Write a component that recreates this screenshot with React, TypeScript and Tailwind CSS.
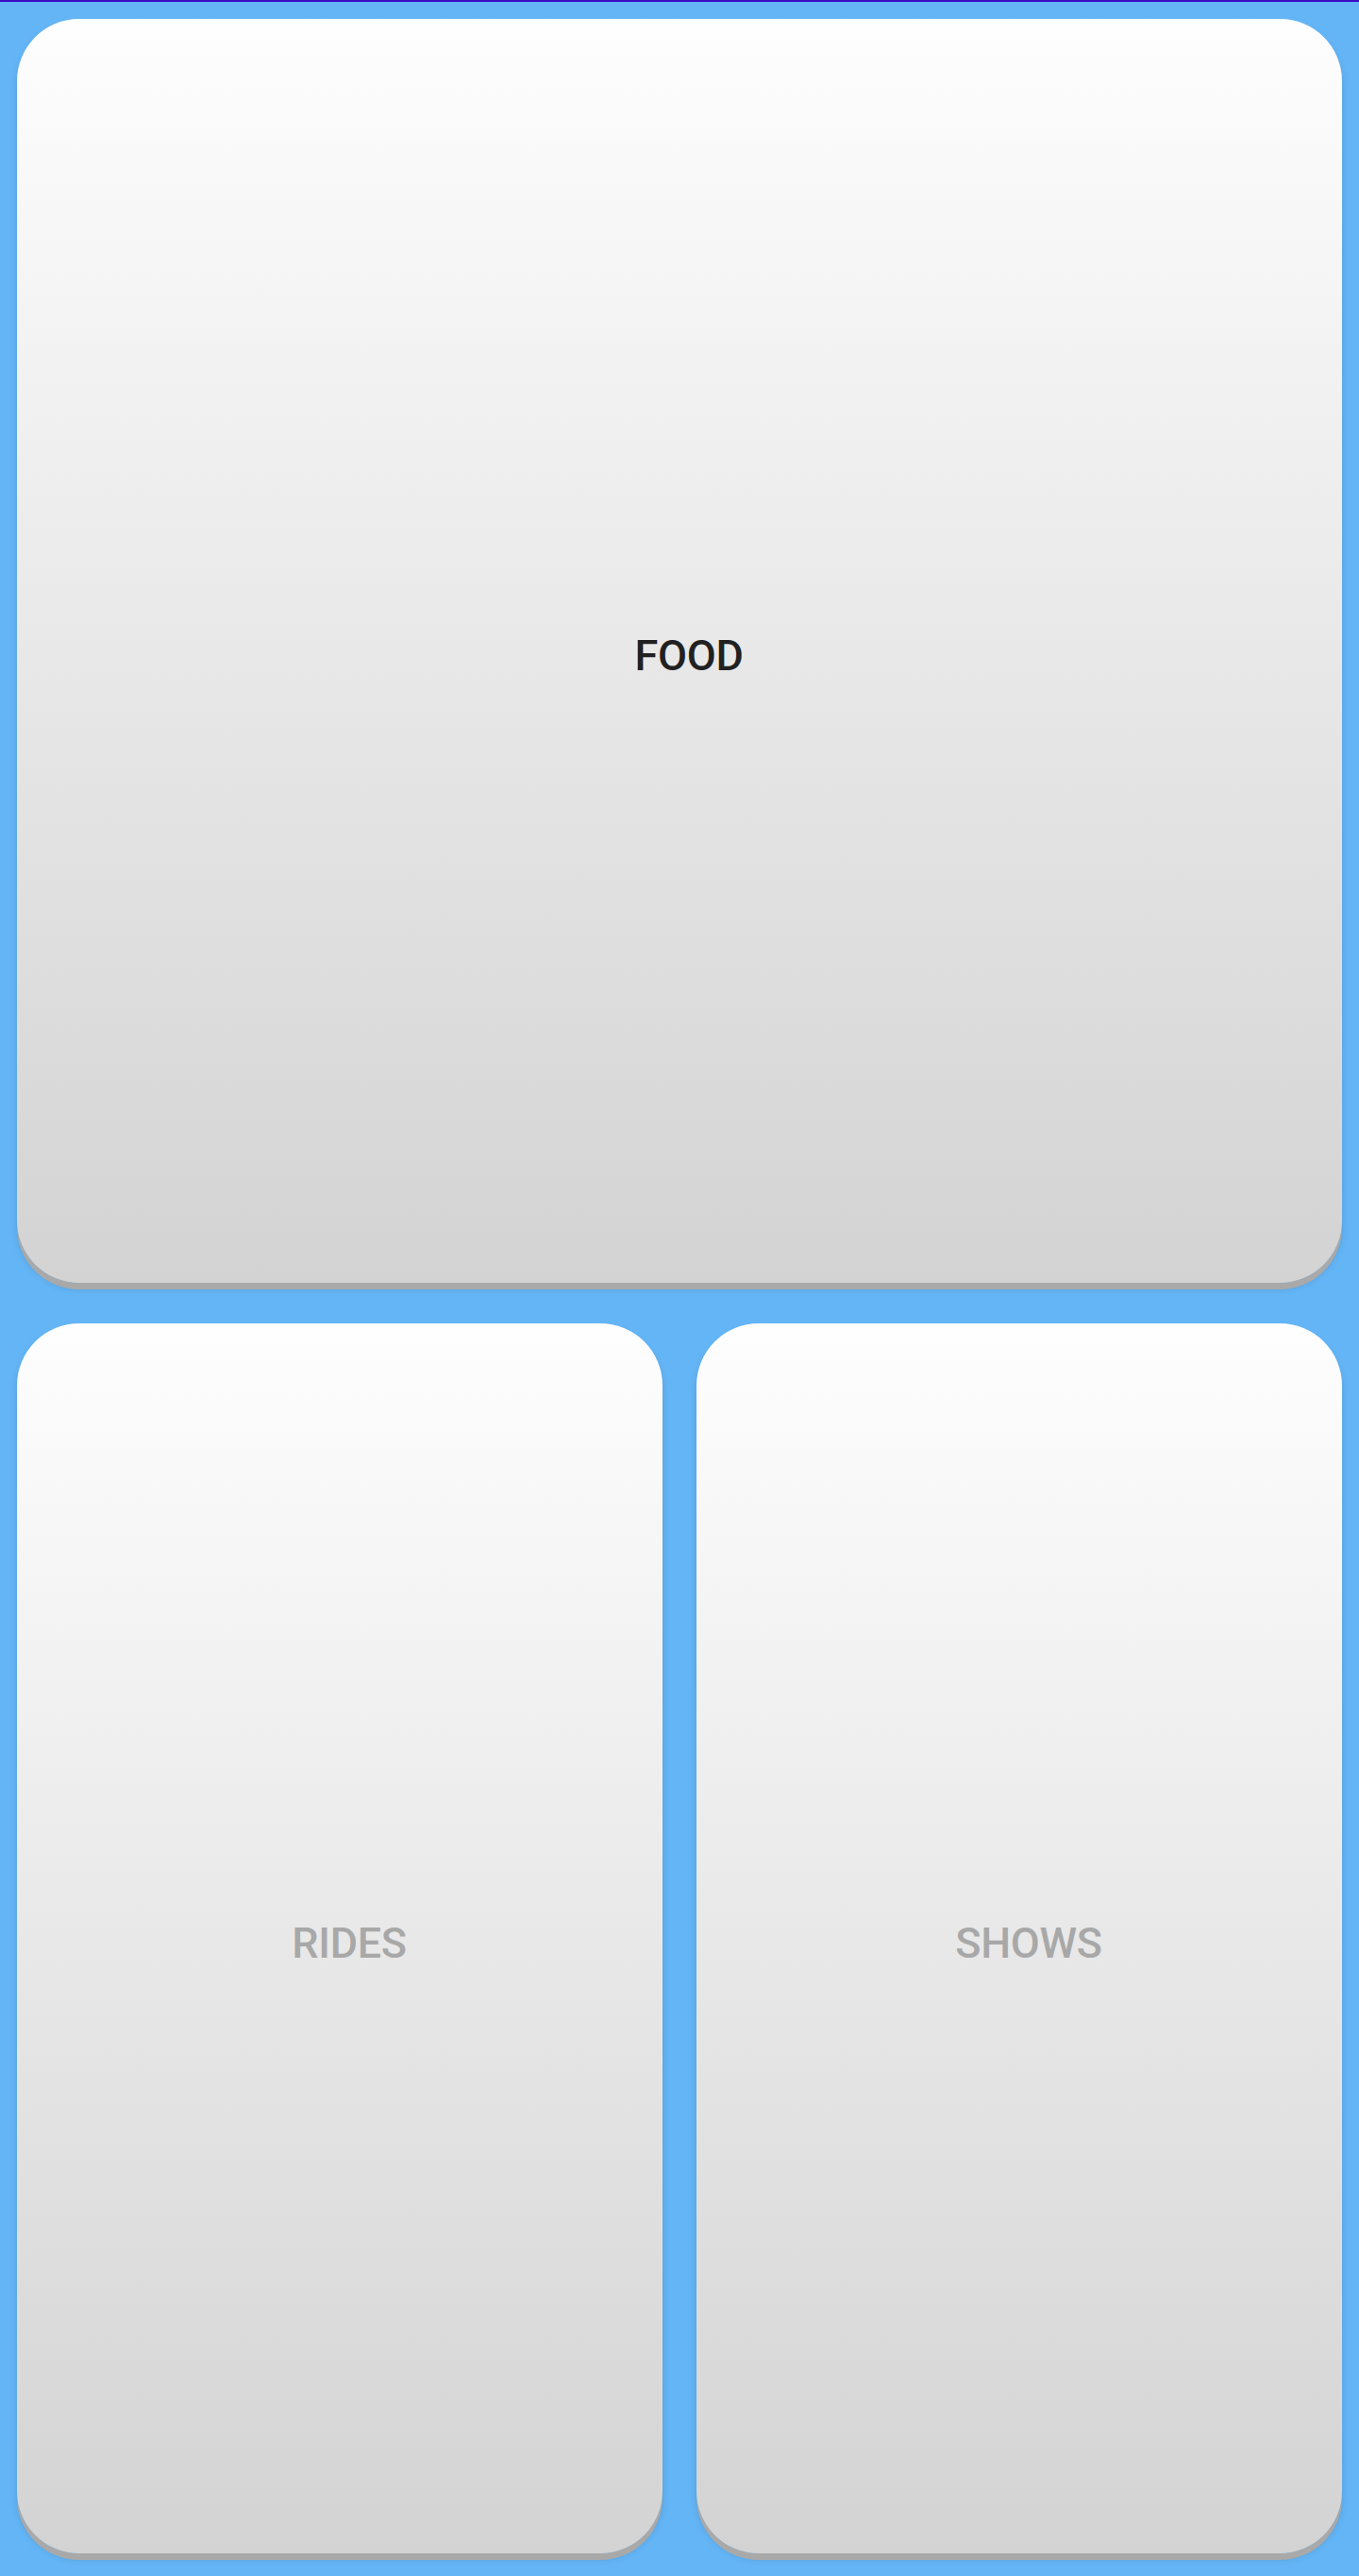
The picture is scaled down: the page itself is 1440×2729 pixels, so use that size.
export default function App() {
  const card =
    "flex items-center justify-center rounded-[66px] bg-linear-to-b from-[#fefefe] to-[#d3d3d3] shadow-[0_7px_0_#a9a9a9,0_6px_10px_-2px_rgba(0,0,0,0.22)]";
  const label = "ml-[20px] mt-[10px] text-[45px] font-medium leading-none tracking-[-0.3px]";

  return (
    <div
      className="flex h-[2729px] w-full flex-col bg-[#64b5f6]"
      style={{ fontFamily: "Roboto, 'Noto Sans', sans-serif" }}
    >
      <div className="h-[2px] w-full bg-[#3d0bc4]" />
      <div className="flex flex-1 flex-col gap-[43px] px-[18px] pt-[18px] pb-[24px]">
        <div className={`${card} h-[1339px]`}>
          <span className={`${label} text-[#212121]`}>FOOD</span>
        </div>
        <div className="grid h-[1303px] grid-cols-2 gap-[36px]">
          <div className={card}>
            <span className={`${label} text-[#a8a8a8]`}>RIDES</span>
          </div>
          <div className={card}>
            <span className={`${label} text-[#a8a8a8]`}>SHOWS</span>
          </div>
        </div>
      </div>
    </div>
  );
}
